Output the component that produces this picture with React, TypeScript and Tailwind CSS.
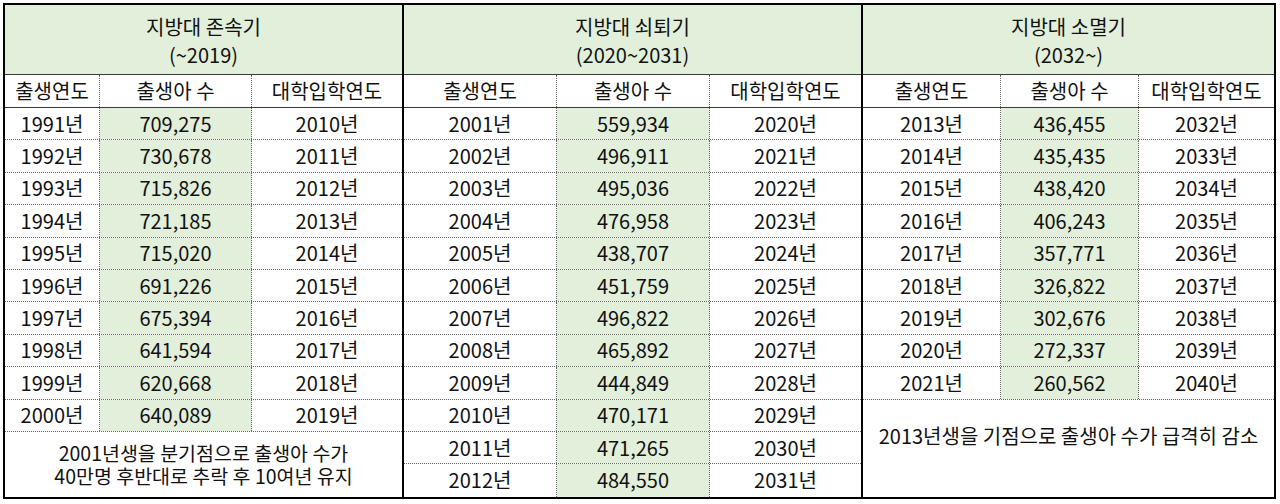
import React from 'react';

// Types
interface Row {
  year: string;
  births: string;
  entry: string;
}

interface Period {
  title: string;
  range: string;
  widths: [string, string, string];
  rows: Row[];
  note?: string[];
  noteClass?: string;
  groupClass: string;
}

const makeRows = (startYear: number, births: string[], entryStart: number): Row[] =>
  births.map((b, i) => ({
    year: `${startYear + i}년`,
    births: b,
    entry: `${entryStart + i}년`,
  }));

const periods: Period[] = [
  {
    title: '지방대 존속기',
    range: '(~2019)',
    widths: ['w-[95px]', 'w-[152px]', 'flex-1'],
    groupClass: 'w-[399px] border-r-2 border-black',
    rows: makeRows(
      1991,
      ['709,275', '730,678', '715,826', '721,185', '715,020', '691,226', '675,394', '641,594', '620,668', '640,089'],
      2010
    ),
    note: ['2001년생을 분기점으로 출생아 수가', '40만명 후반대로 추락 후 10여년 유지'],
    noteClass: 'items-center text-[19.5px]',
  },
  {
    title: '지방대 쇠퇴기',
    range: '(2020~2031)',
    widths: ['w-[153px]', 'w-[153px]', 'flex-1'],
    groupClass: 'w-[459px] border-r-2 border-black',
    rows: makeRows(
      2001,
      ['559,934', '496,911', '495,036', '476,958', '438,707', '451,759', '496,822', '465,892', '444,849', '470,171', '471,265', '484,550'],
      2020
    ),
  },
  {
    title: '지방대 소멸기',
    range: '(2032~)',
    widths: ['w-[138px]', 'w-[138px]', 'flex-1'],
    groupClass: 'flex-1',
    rows: makeRows(
      2013,
      ['436,455', '435,435', '438,420', '406,243', '357,771', '326,822', '302,676', '272,337', '260,562'],
      2032
    ),
    note: ['2013년생을 기점으로 출생아 수가 급격히 감소'],
    noteClass: 'items-start pt-[24px]',
  },
];

const headers = ['출생연도', '출생아 수', '대학입학연도'];

const Cell: React.FC<{ className?: string; children: React.ReactNode }> = ({ className = '', children }) => (
  <div className={`flex items-center justify-center h-full ${className}`}>{children}</div>
);

const PeriodGroup: React.FC<{ period: Period }> = ({ period }) => {
  const [w1, w2, w3] = period.widths;
  const lastIndex = period.rows.length - 1;
  return (
    <div className={`flex flex-col h-full ${period.groupClass}`}>
      {/* Period header */}
      <div className="h-[70px] shrink-0 bg-[#e2efda] border-b border-[#3a3a3a] flex flex-col items-center justify-center leading-[28px] pt-[3px]">
        <span>{period.title}</span>
        <span>{period.range}</span>
      </div>

      {/* Column names */}
      <div className="h-[33px] shrink-0 flex border-b border-[#3a3a3a]">
        <Cell className={`${w1} border-r border-dotted border-[#666]`}>{headers[0]}</Cell>
        <Cell className={`${w2} border-r border-dotted border-[#666]`}>{headers[1]}</Cell>
        <Cell className={w3}>{headers[2]}</Cell>
      </div>

      {/* Data rows */}
      {period.rows.map((row, i) => (
        <div
          key={row.year}
          className={`h-[32.4px] shrink-0 flex ${
            i === lastIndex && !period.note ? '' : 'border-b border-dotted border-[#666]'
          }`}
        >
          <Cell className={`${w1} border-r border-dotted border-[#666]`}>{row.year}</Cell>
          <Cell className={`${w2} bg-[#e2efda] border-r border-dotted border-[#666]`}>{row.births}</Cell>
          <Cell className={w3}>{row.entry}</Cell>
        </div>
      ))}

      {/* Summary note */}
      {period.note && (
        <div className={`flex-1 flex justify-center ${period.noteClass}`}>
          <div className="flex flex-col items-center leading-[23px]">
            {period.note.map((line) => (
              <span key={line}>{line}</span>
            ))}
          </div>
        </div>
      )}
    </div>
  );
};

export default function App() {
  return (
    <div
      className="w-[1280px] h-[504px] bg-white pt-[3px] pl-[3px] text-[20px] text-[#111]"
      style={{ fontFamily: '"Noto Sans CJK KR", "Noto Sans", sans-serif' }}
    >
      <div className="w-[1273px] h-[496px] border-2 border-black flex">
        {periods.map((p) => (
          <PeriodGroup key={p.title} period={p} />
        ))}
      </div>
    </div>
  );
}
